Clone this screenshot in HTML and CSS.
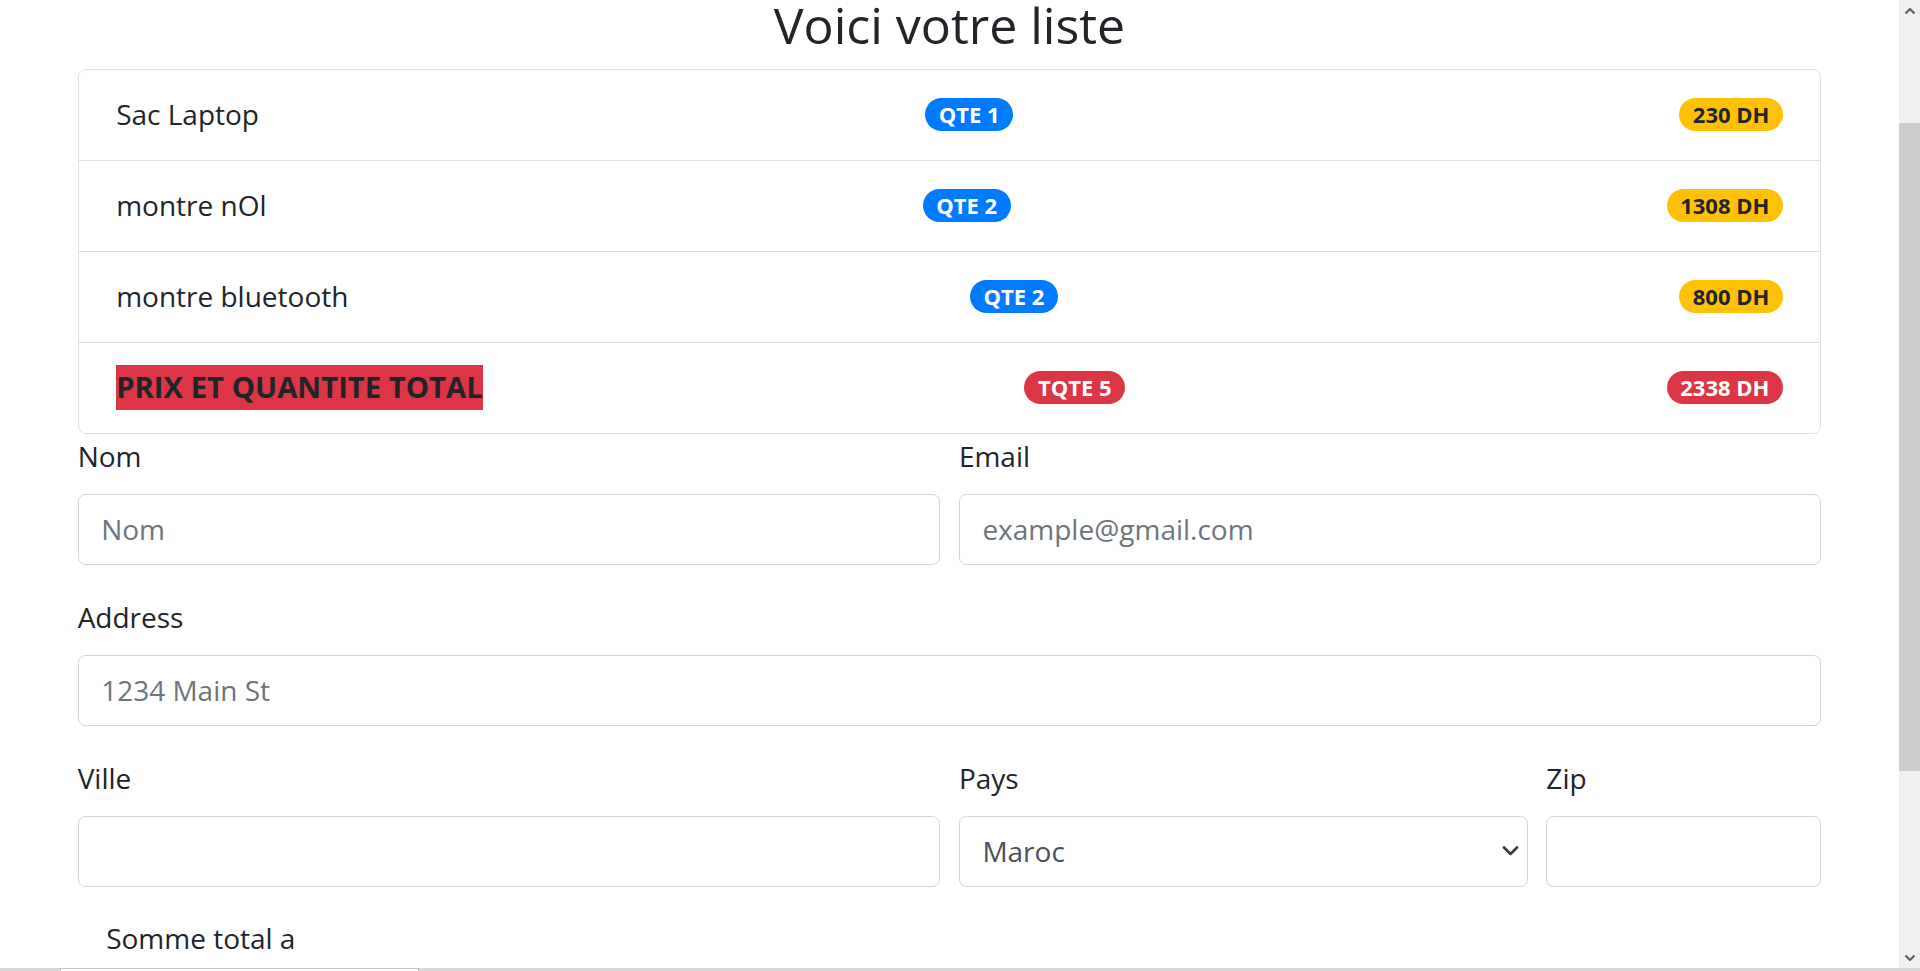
FILE: index.html
```html
<!DOCTYPE html>
<html lang="fr">
<head>
<meta charset="utf-8">
<title>Voici votre liste</title>
<link rel="stylesheet" href="styles.css">
</head>
<body>
<div class="screen">
  <main class="viewport">
    <div class="container">
      <h3 class="title">Voici votre liste</h3>
      <ul class="list-group">
        <li class="list-item">
          <span class="name">Sac Laptop</span>
          <span class="badge badge-primary">QTE 1</span>
          <span class="badge badge-warning">230 DH</span>
        </li>
        <li class="list-item">
          <span class="name">montre nOl</span>
          <span class="badge badge-primary">QTE 2</span>
          <span class="badge badge-warning">1308 DH</span>
        </li>
        <li class="list-item">
          <span class="name">montre bluetooth</span>
          <span class="badge badge-primary">QTE 2</span>
          <span class="badge badge-warning">800 DH</span>
        </li>
        <li class="list-item">
          <strong class="total-label">PRIX ET QUANTITE TOTAL</strong>
          <span class="badge badge-danger">TQTE 5</span>
          <span class="badge badge-danger">2338 DH</span>
        </li>
      </ul>
      <form class="form">
        <div class="form-row">
          <div class="form-group col-6">
            <label class="label" for="nom">Nom</label>
            <input class="form-control" id="nom" type="text" placeholder="Nom">
          </div>
          <div class="form-group col-6">
            <label class="label" for="email">Email</label>
            <input class="form-control" id="email" type="email" placeholder="example@gmail.com">
          </div>
        </div>
        <div class="form-group">
          <label class="label" for="address">Address</label>
          <input class="form-control" id="address" type="text" placeholder="1234 Main St">
        </div>
        <div class="form-row">
          <div class="form-group col-6">
            <label class="label" for="ville">Ville</label>
            <input class="form-control" id="ville" type="text">
          </div>
          <div class="form-group col-4">
            <label class="label" for="pays">Pays</label>
            <div class="select-wrap">
              <select class="form-control select" id="pays">
                <option>Maroc</option>
              </select>
              <svg class="select-arrow" width="17" height="10" viewBox="0 0 17 10"><polyline points="2,1.5 8.5,8 15,1.5" fill="none" stroke="#343a40" stroke-width="2.6" stroke-linecap="round" stroke-linejoin="round"/></svg>
            </div>
          </div>
          <div class="form-group col-2">
            <label class="label" for="zip">Zip</label>
            <input class="form-control" id="zip" type="text">
          </div>
        </div>
        <div class="somme">Somme total a</div>
      </form>
    </div>
  </main>
  <div class="scrollbar">
    <div class="sb-btn">
      <svg width="12" height="8" viewBox="0 0 12 8"><polyline points="1.5,6.5 6,2 10.5,6.5" fill="none" stroke="#606060" stroke-width="2.2"/></svg>
    </div>
    <div class="sb-gap"></div>
    <div class="sb-thumb"></div>
    <div class="sb-rest"></div>
    <div class="sb-btn">
      <svg width="12" height="8" viewBox="0 0 12 8"><polyline points="1.5,1.5 6,6 10.5,1.5" fill="none" stroke="#606060" stroke-width="2.2"/></svg>
    </div>
  </div>
</div>
<div class="strip"><div class="strip-box"></div></div>
</body>
</html>
```

FILE: styles.css
```css
* { box-sizing: border-box; }

html, body {
  margin: 0;
  padding: 0;
  height: 971px;
  overflow: hidden;
  background: #fff;
}

body {
  display: flex;
  flex-direction: column;
  font-family: "Open Sans", "Noto Sans", sans-serif;
  font-size: 28px;
  line-height: 45px;
  color: #212529;
}

.screen {
  height: 968px;
  display: flex;
}

.viewport {
  flex: 1;
  overflow: hidden;
}

.container {
  width: 1743.75px;
  margin: 0 auto;
}

.title {
  margin: -9.4px 0 15px;
  height: 63px;
  line-height: 63px;
  font-size: 50px;
  font-weight: 400;
  text-align: center;
  padding-top: 3px;
}

.list-group {
  list-style: none;
  margin: 0;
  padding: 0;
  border: 1px solid #dfdfdf;
  border-radius: 7.5px;
}

.list-item {
  display: flex;
  justify-content: space-between;
  align-items: center;
  padding: 22.5px 37.5px;
  height: 90px;
}

.list-item + .list-item {
  border-top: 1px solid #dfdfdf;
  height: 91px;
}

.name {
  line-height: 45px;
}

.total-label {
  display: inline-block;
  background: #dc3545;
  font-weight: 700;
  font-size: 29.3px;
  line-height: 45px;
  height: 45px;
}

.badge {
  display: inline-block;
  font-size: 22px;
  font-weight: 700;
  line-height: 22.5px;
  padding: 5.625px 13.5px;
  border-radius: 20px;
  white-space: nowrap;
}

.badge-primary { background: #007bff; color: #fff; }
.badge-warning { background: #ffc107; color: #212529; }
.badge-danger { background: #dc3545; color: #fff; }

.form-row {
  display: flex;
  margin: 0 -9.375px;
}

.form-group {
  margin-bottom: 30px;
}

.form-row > .form-group {
  padding: 0 9.375px;
}

.col-6 { width: 50%; }
.col-4 { width: 33.3333%; }
.col-2 { width: 16.6667%; }

.label {
  display: inline-block;
  margin-bottom: 15px;
  line-height: 45px;
}

.form-control {
  display: block;
  width: 100%;
  height: 71.25px;
  padding: 11.25px 22.5px;
  font-family: inherit;
  font-size: 28px;
  line-height: 45px;
  color: #495057;
  background: #fff;
  border: 1px solid #ced4da;
  border-radius: 7.5px;
  outline: none;
}

.form-control::placeholder {
  color: #6c757d;
  opacity: 1;
}

.select-wrap {
  position: relative;
}

.select {
  appearance: none;
  -webkit-appearance: none;
  padding-right: 50px;
}

.select-arrow {
  position: absolute;
  right: 9px;
  top: 30px;
}

.somme {
  padding-left: 28.5px;
  line-height: 45px;
  margin-top: -1px;
}

.scrollbar {
  width: 21px;
  background: #f0f0f0;
  display: flex;
  flex-direction: column;
}

.sb-btn {
  height: 21px;
  display: flex;
  align-items: center;
  justify-content: center;
}

.sb-gap { height: 101.7px; }
.sb-thumb { height: 648px; background: #cdcdcd; }
.sb-rest { flex: 1; }

.strip {
  height: 3px;
  background: #d8d8d8;
  padding-left: 60px;
}

.strip-box {
  width: 359px;
  height: 3px;
  background: #fdfdfd;
  border-left: 1px solid #bdbdbd;
  border-right: 1px solid #bdbdbd;
  border-top: 1px solid #c8c8c8;
}
```
